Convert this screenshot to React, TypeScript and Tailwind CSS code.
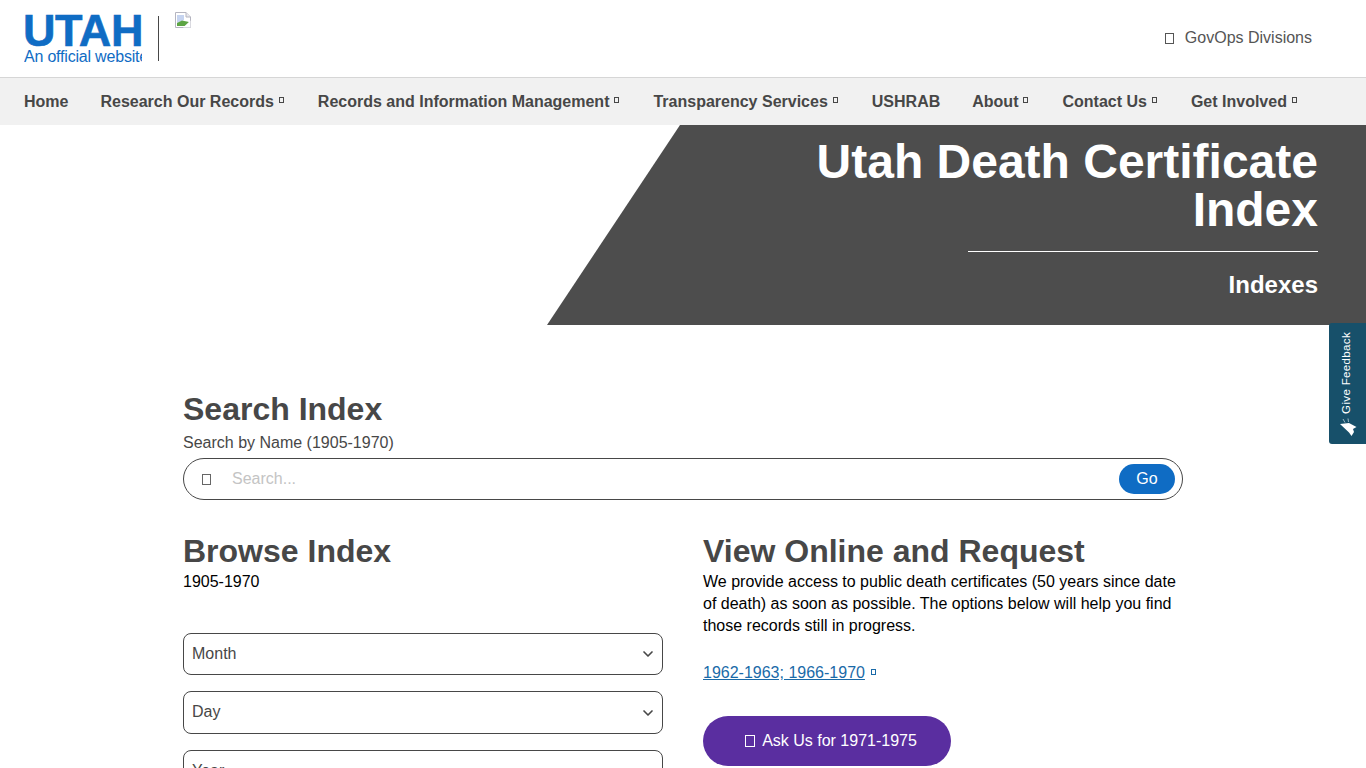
import { ChevronDown } from "lucide-react";

const FONT = "font-['Liberation_Sans',Arial,sans-serif]";

const NAV_ITEMS = [
  { label: "Home", caret: false },
  { label: "Research Our Records", caret: true },
  { label: "Records and Information Management", caret: true },
  { label: "Transparency Services", caret: true },
  { label: "USHRAB", caret: false },
  { label: "About", caret: true },
  { label: "Contact Us", caret: true },
  { label: "Get Involved", caret: true },
];

// icon font glyphs that failed to load show up as empty boxes
function Tofu({ className }: { className: string }) {
  return <span className={`inline-block shrink-0 border border-current ${className}`} />;
}

function BrokenImage() {
  return (
    <svg width="16" height="16" viewBox="0 0 16 16" className="block">
      <path d="M0.5 0.5H11L15.5 5V15.5H0.5Z" fill="#fff" stroke="#b5b5c0" />
      <path d="M11 0.5V5H15.5" fill="#e8e8ee" stroke="#b5b5c0" />
      <path d="M2 3H9V8L2 11Z" fill="#c6d4f0" />
      <path d="M2 14V11L7 8.5L14 10V14Z" fill="#5da544" />
      <path d="M8 15.5L15.5 8.5V15.5Z" fill="#fff" />
    </svg>
  );
}

function SelectBox({ label, tall }: { label: string; tall?: boolean }) {
  return (
    <div
      className={`flex items-center justify-between rounded-lg border border-[#474747] pl-2 pr-[6px] text-[#474747] ${
        tall ? "h-[43px]" : "h-[42px]"
      }`}
    >
      <span className={tall ? "-mt-[2px]" : "-mt-[1px]"}>{label}</span>
      <ChevronDown size={16} strokeWidth={2.5} />
    </div>
  );
}

export default function App() {
  return (
    <div className={`relative h-[768px] overflow-hidden bg-white text-base text-[#474747] ${FONT}`}>
      {/* Cabecera */}
      <header className="flex h-[77px] items-start justify-between pl-6 pr-[54px] pt-[13px]">
        <div className="flex items-start">
          <div className="w-[118px] overflow-hidden whitespace-nowrap text-[#0f6cc4]">
            <div className="-ml-[1px] h-[35px] text-[45px] font-bold leading-[36px] tracking-[-0.4px] [-webkit-text-stroke:0.6px_#0f6cc4]">
              UTAH
            </div>
            <div className="mt-[1px] text-base leading-[16px] tracking-[-0.2px]">
              An official website of the State of Utah
            </div>
          </div>
          <div className="ml-4 mt-[3px] h-[45px] w-px bg-[#474747]" />
          <div className="-mt-[1px] ml-4">
            <BrokenImage />
          </div>
        </div>
        <div className="mt-[13px] flex items-center gap-[11px] text-[#555]">
          <Tofu className="h-[11px] w-[9px]" />
          <span>GovOps Divisions</span>
        </div>
      </header>

      {/* Navegación */}
      <nav className="flex h-[48px] items-center gap-8 border-t border-[#d6d6d6] bg-[#f1f1f1] pl-6 font-bold">
        {NAV_ITEMS.map((item) => (
          <div key={item.label} className="flex items-center gap-[5px]">
            <span>{item.label}</span>
            {item.caret && <Tofu className="mb-[3px] mr-[2px] h-[6px] w-[5px]" />}
          </div>
        ))}
      </nav>

      {/* Banner */}
      <section className="flex h-[200px] flex-col items-end bg-[#4d4d4d] pr-12 text-white [clip-path:polygon(680px_0,100%_0,100%_100%,547px_100%)]">
        <h1 className="mt-[13px] w-[600px] text-right text-[48px] font-bold leading-[48px]">
          Utah Death Certificate Index
        </h1>
        <div className="mt-[17px] h-px w-[350px] bg-white" />
        <p className="mt-[19px] text-2xl font-bold leading-[28px]">Indexes</p>
      </section>

      {/* Contenido */}
      <main className="mx-auto w-[1000px] pt-[64px]">
        <h2 className="text-[32px] font-bold leading-[40px]">Search Index</h2>
        <p className="mt-[3px] leading-[22px]">Search by Name (1905-1970)</p>
        <div className="mt-[4px] flex h-[42px] items-center rounded-[21px] border border-[#474747] pl-[18px] pr-[7px]">
          <Tofu className="h-[11px] w-[9px] text-[#666]" />
          <span className="ml-[21px] flex-1 text-[#c4c4c4]">Search...</span>
          <button className="h-[30px] w-[56px] rounded-[15px] bg-[#0f6cc4] text-white">Go</button>
        </div>

        <div className="mt-[31px] grid grid-cols-2 gap-10">
          <div>
            <h2 className="text-[32px] font-bold leading-[40px]">Browse Index</h2>
            <p className="leading-[22px] text-black">1905-1970</p>
            <div className="mt-[40px] flex flex-col gap-4">
              <SelectBox label="Month" />
              <SelectBox label="Day" tall />
              <SelectBox label="Year" />
            </div>
          </div>
          <div>
            <h2 className="text-[32px] font-bold leading-[40px]">View Online and Request</h2>
            <p className="leading-[22px] text-black">
              We provide access to public death certificates (50 years since date of death) as soon as possible. The
              options below will help you find those records still in progress.
            </p>
            <div className="mt-[25px] flex items-center gap-[6px] leading-[22px] text-[#1a6aa8]">
              <a className="underline">1962-1963; 1966-1970</a>
              <Tofu className="mb-[2px] h-[6px] w-[5px]" />
            </div>
            <button className="mt-[32px] flex h-[50px] w-[248px] items-center justify-center gap-[7px] rounded-[25px] bg-[#5a2ea0] pl-2 text-white">
              <Tofu className="h-[12px] w-[10px]" />
              <span>Ask Us for 1971-1975</span>
            </button>
          </div>
        </div>
      </main>

      {/* Pestaña de comentarios */}
      <div className="absolute right-0 top-[323px] flex h-[121px] w-[37px] flex-col items-center justify-end rounded-l-[3px] bg-[#17506a] pb-[7px] pr-[3px] text-white">
        <span className="text-[11.5px] leading-[14px] tracking-[0.35px] [transform:rotate(180deg)] [writing-mode:vertical-rl]">
          Give Feedback
        </span>
        <svg width="18" height="19" viewBox="0 0 18 19" className="ml-[4px] mt-[4px]">
          <path d="M1 6L10 5L17.5 9L14 11L15 14L12.5 18L10 14.5Z" fill="#fff" />
          <path d="M4 1L6 4.5M9 0.5L9.5 4" stroke="#9fb8c4" strokeWidth="1" fill="none" />
        </svg>
      </div>
    </div>
  );
}
